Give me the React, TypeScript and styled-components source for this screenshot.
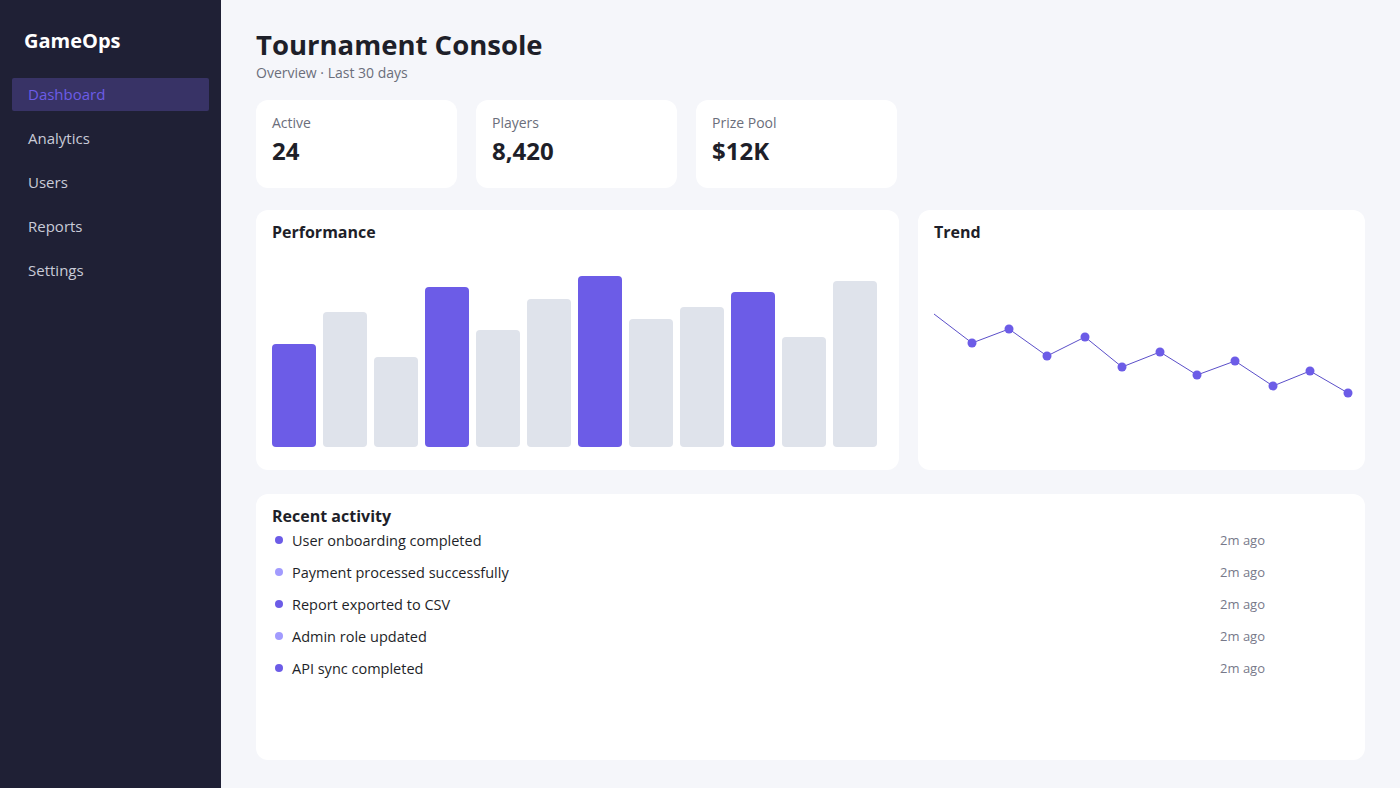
import React from "react";
import styled, { createGlobalStyle } from "styled-components";

const GlobalStyle = createGlobalStyle`
  * {
    box-sizing: border-box;
  }
  body {
    margin: 0;
    font-family: "Open Sans", "Noto Sans", sans-serif;
    background: #f5f6fa;
    color: #1e1f29;
  }
`;

const Layout = styled.div`
  display: flex;
  height: 100vh;
  min-height: 788px;
`;

const Sidebar = styled.aside`
  width: 221px;
  flex-shrink: 0;
  background: #1f2035;
  padding: 29px 12px;
  display: flex;
  flex-direction: column;
`;

const Logo = styled.div`
  font-size: 20px;
  line-height: 24px;
  font-weight: 700;
  color: #ffffff;
  padding-left: 12px;
  margin-bottom: 25px;
`;

const Nav = styled.nav`
  display: flex;
  flex-direction: column;
  gap: 11px;
`;

const NavItem = styled.a<{ $active?: boolean }>`
  display: flex;
  align-items: center;
  height: 33px;
  padding: 0 16px 2px;
  border-radius: 2px;
  font-size: 15px;
  color: ${(p) => (p.$active ? "#6c5ce7" : "#c9cbd8")};
  background: ${(p) => (p.$active ? "#383366" : "transparent")};
  text-decoration: none;
  cursor: pointer;
`;

const Main = styled.main`
  flex: 1;
  padding: 28px 35px;
  display: flex;
  flex-direction: column;
`;

const Title = styled.h1`
  margin: 0;
  font-size: 27.5px;
  line-height: 34px;
  font-weight: 700;
  color: #1e1f29;
`;

const Subtitle = styled.div`
  font-size: 14px;
  line-height: 17px;
  color: #6b6e7b;
  margin-top: 2px;
`;

const StatsRow = styled.div`
  display: flex;
  gap: 19px;
  margin-top: 19px;
`;

const Card = styled.section`
  background: #ffffff;
  border-radius: 12px;
  padding: 12px 16px;
`;

const StatCard = styled(Card)`
  width: 201px;
  height: 88px;
  padding-top: 14px;
`;

const StatLabel = styled.div`
  font-size: 14px;
  line-height: 18px;
  color: #6b6e7b;
`;

const StatValue = styled.div`
  font-size: 24px;
  line-height: 29px;
  font-weight: 700;
  color: #1e1f29;
  margin-top: 4px;
`;

const ChartsRow = styled.div`
  display: grid;
  grid-template-columns: 643px 1fr;
  gap: 19px;
  margin-top: 22px;
`;

const ChartCard = styled(Card)`
  height: 260px;
`;

const CardTitle = styled.h2`
  margin: 0;
  font-size: 16px;
  line-height: 20px;
  font-weight: 700;
  color: #1e1f29;
`;

const Bars = styled.div`
  display: flex;
  align-items: flex-end;
  gap: 7px;
  height: 180px;
  margin-top: 25px;
`;

const Bar = styled.div<{ $accent: boolean }>`
  width: 44px;
  border-radius: 4px;
  background: ${(p) => (p.$accent ? "#6c5ce7" : "#dfe3eb")};
`;

const TrendSvg = styled.svg`
  display: block;
  margin-top: 12px;
  width: 100%;
  height: 200px;
  overflow: visible;
`;

const ActivityCard = styled(Card)`
  flex: 1;
  margin-top: 24px;
`;

const ActivityList = styled.ul`
  list-style: none;
  margin: 0;
  padding: 0 84px 0 0;
  display: flex;
  flex-direction: column;
  gap: 4px;
`;

const ActivityRow = styled.li`
  display: flex;
  align-items: center;
  height: 28px;
`;

const Dot = styled.span<{ $light: boolean }>`
  width: 8px;
  height: 8px;
  border-radius: 50%;
  flex-shrink: 0;
  margin: 0 9px 0 3px;
  background: ${(p) => (p.$light ? "#a29bfe" : "#6c5ce7")};
`;

const ActivityText = styled.span`
  flex: 1;
  font-size: 14.5px;
  color: #1e1f29;
`;

const ActivityTime = styled.span`
  font-size: 13px;
  color: #77798a;
`;

const navItems = ["Dashboard", "Analytics", "Users", "Reports", "Settings"];

const stats = [
  { label: "Active", value: "24" },
  { label: "Players", value: "8,420" },
  { label: "Prize Pool", value: "$12K" },
];

const barValues = [57, 75, 50, 89, 65, 82, 95, 71, 78, 86, 61, 92];
const accentBars = [0, 3, 6, 9];

const trendPoints: [number, number][] = [
  [0, 60],
  [38, 89],
  [75, 75],
  [113, 102],
  [151, 83],
  [188, 113],
  [226, 98],
  [263, 121],
  [301, 107],
  [339, 132],
  [376, 117],
  [414, 139],
];

const activities = [
  "User onboarding completed",
  "Payment processed successfully",
  "Report exported to CSV",
  "Admin role updated",
  "API sync completed",
];

const Trend = () => (
  <TrendSvg viewBox="0 0 415 200" preserveAspectRatio="none">
    <polyline
      points={trendPoints.map(([x, y]) => `${x},${y}`).join(" ")}
      fill="none"
      stroke="#5b4fc9"
      strokeWidth={1}
    />
    {trendPoints.slice(1).map(([x, y]) => (
      <circle key={x} cx={x} cy={y} r={4.5} fill="#6c5ce7" />
    ))}
  </TrendSvg>
);

const App = () => (
  <>
    <GlobalStyle />
    <Layout>
      <Sidebar>
        <Logo>GameOps</Logo>
        <Nav>
          {navItems.map((item, i) => (
            <NavItem key={item} $active={i === 0}>
              {item}
            </NavItem>
          ))}
        </Nav>
      </Sidebar>
      <Main>
        <Title>Tournament Console</Title>
        <Subtitle>Overview · Last 30 days</Subtitle>
        <StatsRow>
          {stats.map((s) => (
            <StatCard key={s.label}>
              <StatLabel>{s.label}</StatLabel>
              <StatValue>{s.value}</StatValue>
            </StatCard>
          ))}
        </StatsRow>
        <ChartsRow>
          <ChartCard>
            <CardTitle>Performance</CardTitle>
            <Bars>
              {barValues.map((v, i) => (
                <Bar
                  key={i}
                  $accent={accentBars.includes(i)}
                  style={{ height: `${v}%` }}
                />
              ))}
            </Bars>
          </ChartCard>
          <ChartCard>
            <CardTitle>Trend</CardTitle>
            <Trend />
          </ChartCard>
        </ChartsRow>
        <ActivityCard>
          <CardTitle>Recent activity</CardTitle>
          <ActivityList>
            {activities.map((a, i) => (
              <ActivityRow key={a}>
                <Dot $light={i % 2 === 1} />
                <ActivityText>{a}</ActivityText>
                <ActivityTime>2m ago</ActivityTime>
              </ActivityRow>
            ))}
          </ActivityList>
        </ActivityCard>
      </Main>
    </Layout>
  </>
);

export default App;
